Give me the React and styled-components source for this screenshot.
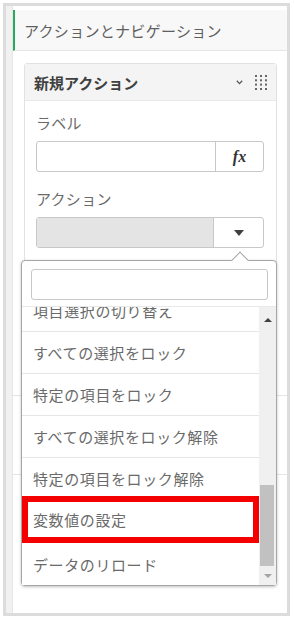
import React, { useLayoutEffect, useRef } from 'react'
import styled, { createGlobalStyle } from 'styled-components'

const GlobalStyle = createGlobalStyle`
    body {
        margin: 0;
        background: #fff;
        font-family: "Noto Sans CJK JP", "Noto Sans", sans-serif;
    }
`

const Frame = styled.div`
    position: relative;
    display: flex;
    box-sizing: border-box;
    width: 287px;
    height: 613px;
    margin: 3px 0 0 3px;
    border: 3px solid #dcdcdc;
    background: #fff;
    overflow: hidden;
`

const Gutter = styled.div`
    width: 6px;
    background: #f1f1f1;
    border-right: 1px solid #e6e6e6;
`

const Panel = styled.div`
    flex: 1;
    display: flex;
    flex-direction: column;
    padding-top: 4px;
`

const PanelHeader = styled.div`
    display: flex;
    align-items: center;
    box-sizing: border-box;
    height: 41px;
    padding-left: 9px;
    border-left: 2px solid #2aa85d;
    border-bottom: 1px solid #e5e5e5;
    background: #f8f8f8;
    font-size: 15px;
    letter-spacing: 0.3px;
    color: #5f5f5f;
`

const Section = styled.div`
    box-sizing: border-box;
    height: ${({ $height }) => $height}px;
    padding: ${({ $pad }) => ($pad ? '12px 10px 0 11px' : '0')};
    border-bottom: 1px solid #e5e5e5;
`

const Card = styled.div`
    border: 1px solid #e2e2e2;
    border-radius: 3px;
    background: #fff;
`

const CardHeader = styled.div`
    display: flex;
    align-items: center;
    justify-content: space-between;
    height: 36px;
    padding: 0 9px;
    border-bottom: 1px solid #e8e8e8;
    background: #f4f4f4;
`

const CardTitle = styled.h1`
    margin: 0;
    font-size: 15px;
    font-weight: 700;
    color: #404040;
`

const HeaderIcons = styled.div`
    display: flex;
    align-items: center;
    gap: 12px;
`

const CardBody = styled.div`
    padding: 12px 12px 16px 11px;
`

const FieldLabel = styled.div`
    margin: ${({ $first }) => ($first ? '0' : '17px')} 0 8px;
    font-size: 15px;
    line-height: 20px;
    letter-spacing: 0.3px;
    color: #6a6a6a;
`

const FieldRow = styled.div`
    position: relative;
    display: flex;
    box-sizing: border-box;
    height: 31px;
    border: 1px solid #c8c8c8;
    border-radius: 3px;
    background: #fff;
`

const TextInput = styled.div`
    flex: 1;
`

const SelectValue = styled.div`
    flex: 1;
    background: #e4e4e4;
    border-radius: 2px 0 0 2px;
`

const SideButton = styled.div`
    display: flex;
    align-items: center;
    justify-content: center;
    width: ${({ $w }) => $w}px;
    border-left: 1px solid #c8c8c8;
    font-family: "Liberation Serif", serif;
    font-style: italic;
    font-weight: 700;
    font-size: 16px;
    color: #333;
`

const DownTriangle = styled.span`
    width: 0;
    height: 0;
    border-left: 5px solid transparent;
    border-right: 5px solid transparent;
    border-top: 6px solid #404040;
`

const Dropdown = styled.div`
    position: absolute;
    top: calc(100% + 13px);
    left: -16px;
    z-index: 10;
    display: flex;
    flex-direction: column;
    box-sizing: border-box;
    width: 256px;
    height: 326px;
    border: 1px solid #a6a6a6;
    border-radius: 4px;
    background: #fff;
    box-shadow: 0 1px 3px rgba(0, 0, 0, 0.25);

    &::before {
        content: '';
        position: absolute;
        top: -7px;
        left: 212px;
        width: 11px;
        height: 11px;
        background: #fff;
        border-left: 1px solid #a6a6a6;
        border-top: 1px solid #a6a6a6;
        transform: rotate(45deg);
    }
`

const Search = styled.div`
    box-sizing: border-box;
    height: 31px;
    margin: 8px 8px 6px 9px;
    border: 1px solid #c8c8c8;
    border-radius: 3px;
`

const DropBody = styled.div`
    flex: 1;
    min-height: 0;
    display: flex;
    border-top: 1px solid #e8e8e8;
`

const List = styled.div`
    flex: 1;
    overflow: hidden;
`

const Item = styled.div`
    display: flex;
    align-items: center;
    box-sizing: border-box;
    height: 42px;
    padding-left: 11px;
    border-bottom: 1px solid #e6e6e6;
    background: #fff;
    font-size: 15px;
    letter-spacing: 0.6px;
    color: #6a6a6a;
    white-space: nowrap;

    &:last-child {
        border-bottom: none;
    }
`

const MarkedItem = styled(Item)`
    height: 47px;
    margin-top: -4px;
    padding-left: 5px;
    border: 6px solid #f40000;

    &:last-child {
        border-bottom: 6px solid #f40000;
    }
`

const Track = styled.div`
    display: flex;
    flex-direction: column;
    width: 17px;
    background: #f0f0f0;
`

const TrackArrow = styled.div`
    display: flex;
    align-items: center;
    justify-content: center;
    height: ${({ $h }) => $h}px;
`

const ArrowUp = styled.span`
    width: 0;
    height: 0;
    border-left: 4px solid transparent;
    border-right: 4px solid transparent;
    border-bottom: 4px solid #404040;
`

const ArrowDown = styled.span`
    width: 0;
    height: 0;
    border-left: 4px solid transparent;
    border-right: 4px solid transparent;
    border-top: 4px solid #a3a3a3;
`

const TrackSpace = styled.div`
    flex: 1;
`

const Thumb = styled.div`
    height: 81px;
    margin: 0 2px 0 1px;
    background: #c1c1c1;
`

const actions = [
    'すべての選択をクリア',
    '他の項目の選択をクリア',
    '前に進む',
    '後ろに戻る',
    '項目の選択をクリア',
    '項目のすべての値を選択',
    '項目の値を選択',
    '項目で一致する値を選択',
    '代替値を選択',
    '除外値を選択',
    '可能性のある値を選択',
    '項目選択の切り替え',
    'すべての選択をロック',
    '特定の項目をロック',
    'すべての選択をロック解除',
    '特定の項目をロック解除',
    '変数値の設定',
    'データのリロード',
]

const Chevron = () => (
    <svg width="7" height="5" viewBox="0 0 7 5">
        <polyline points="0.8,0.8 3.5,3.6 6.2,0.8" fill="none" stroke="#555" strokeWidth="1.3" />
    </svg>
)

const DragGrip = () => (
    <svg width="12" height="15" viewBox="0 0 12 15">
        {[0, 4.3, 8.6, 13].map(y =>
            [0, 5, 10].map(x => <rect key={`${x}-${y}`} x={x} y={y} width="2" height="2" fill="#666" />)
        )}
    </svg>
)

const App = () => {
    const listRef = useRef(null)

    useLayoutEffect(() => {
        if (listRef.current) listRef.current.scrollTop = listRef.current.scrollHeight
    }, [])

    return (
        <>
            <GlobalStyle />
            <Frame>
                <Gutter />
                <Panel>
                    <PanelHeader>アクションとナビゲーション</PanelHeader>
                    <Section $height={345} $pad>
                        <Card>
                            <CardHeader>
                                <CardTitle>新規アクション</CardTitle>
                                <HeaderIcons>
                                    <Chevron />
                                    <DragGrip />
                                </HeaderIcons>
                            </CardHeader>
                            <CardBody>
                                <FieldLabel $first>ラベル</FieldLabel>
                                <FieldRow>
                                    <TextInput />
                                    <SideButton $w={47}>fx</SideButton>
                                </FieldRow>
                                <FieldLabel>アクション</FieldLabel>
                                <FieldRow>
                                    <SelectValue />
                                    <SideButton $w={49}><DownTriangle /></SideButton>
                                    <Dropdown>
                                        <Search />
                                        <DropBody>
                                            <List ref={listRef}>
                                                {actions.map(a =>
                                                    a === '変数値の設定'
                                                        ? <MarkedItem key={a}>{a}</MarkedItem>
                                                        : <Item key={a}>{a}</Item>
                                                )}
                                            </List>
                                            <Track>
                                                <TrackArrow $h={26}><ArrowUp /></TrackArrow>
                                                <TrackSpace />
                                                <Thumb />
                                                <TrackArrow $h={19}><ArrowDown /></TrackArrow>
                                            </Track>
                                        </DropBody>
                                    </Dropdown>
                                </FieldRow>
                            </CardBody>
                        </Card>
                    </Section>
                    <Section $height={79} />
                </Panel>
            </Frame>
        </>
    )
}

export default App
